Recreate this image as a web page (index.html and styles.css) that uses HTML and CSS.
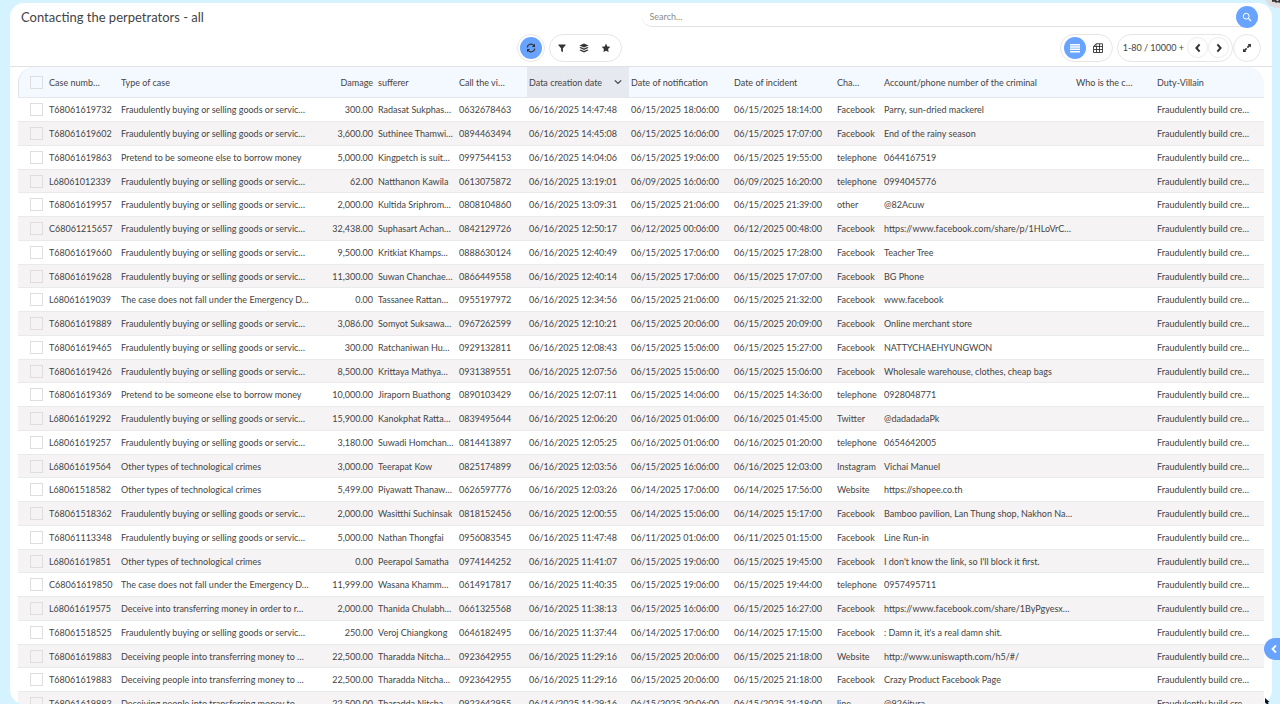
FILE: index.html
```
<!DOCTYPE html>
<html lang="en">
<head>
<meta charset="utf-8">
<title>Contacting the perpetrators</title>
<link rel="stylesheet" href="styles.css">
</head>
<body>
<main class="card">
  <header class="topbar">
    <h1 class="title">Contacting the perpetrators - all</h1>
    <form class="search">
      <input class="search-input" type="text" placeholder="Search..." aria-label="Search">
      <button class="search-button" type="button" aria-label="Search">
        <svg width="10" height="10" viewBox="0 0 10 10" fill="none" stroke="currentColor"><circle cx="4.2" cy="4.2" r="2.9"/><path d="M6.4 6.4 9 9" stroke-width="1.3"/></svg>
      </button>
    </form>
  </header>
  <div class="toolbar">
    <div class="tools tools-middle">
      <div class="pill">
        <button class="round active" type="button" aria-label="Refresh">
          <svg width="10" height="10" viewBox="0 0 10 10" fill="none" stroke="currentColor" stroke-width="1.2"><path d="M1.2 4.4A3.8 3.8 0 0 1 8 2.7M8.8 5.6A3.8 3.8 0 0 1 2 7.3"/><path d="M9 .8V4H5.8ZM1 9.2V6h3.2Z" fill="currentColor" stroke="none"/></svg>
        </button>
      </div>
      <div class="pill views">
        <button class="round" type="button" aria-label="Filter">
          <svg width="10" height="10" viewBox="0 0 10 10" fill="currentColor"><path d="M1.400 1.500h7.200v.8L5.900 5.200v4L4.100 8V5.200L1.400 2.300Z"/></svg>
        </button>
        <button class="round" type="button" aria-label="Layers">
          <svg width="10" height="10" viewBox="0 0 10 10" fill="currentColor"><path d="M5 .4 9.6 2.5 5 4.6.4 2.5Z"/><path d="M.4 4.7 1.8 4 5 5.5 8.2 4l1.4.7L5 6.9ZM.4 7.2l1.4-.7L5 8l3.2-1.5 1.4.7L5 9.6Z"/></svg>
        </button>
        <button class="round" type="button" aria-label="Favourites">
          <svg width="10" height="10" viewBox="0 0 10 10" fill="currentColor"><path d="m5 .6 1.300 2.800 3 .4-2.200 2.200.5 3.100L5 7.700 2.400 9.100l.5-3.100L.7 3.800l3-.4Z"/></svg>
        </button>
      </div>
    </div>
    <div class="tools tools-right">
      <div class="pill modes">
        <button class="round active light" type="button" aria-label="List view">
          <svg width="10" height="10" viewBox="0 0 10 10" fill="currentColor"><path d="M0 1h10v1.500H0zM0 3.300h10v1.500H0zM0 5.600h10v1.500H0zM0 7.900h10v1.500H0z"/></svg>
        </button>
        <button class="round" type="button" aria-label="Pivot view">
          <svg width="10" height="10" viewBox="0 0 10 10" fill="none" stroke="currentColor" stroke-width=".9"><path d="M.5 3.500H3V.8h6.500v8.700h-9ZM.5 3.500 3 .8M3 3.500h6.500M.5 6.500h9M3.500 3v6.500M6.500.8v8.700"/></svg>
        </button>
      </div>
      <div class="pager-group">
        <div class="pill pager">
          <span class="count">1-80 / 10000 +</span>
          <button class="round ringed" type="button" aria-label="Previous page">
            <svg width="10" height="10" viewBox="0 0 10 10" fill="none" stroke="currentColor" stroke-width="2"><path d="M6.600 1.300 3.400 5l3.200 3.700"/></svg>
          </button>
          <button class="round ringed" type="button" aria-label="Next page">
            <svg width="10" height="10" viewBox="0 0 10 10" fill="none" stroke="currentColor" stroke-width="2"><path d="M3.400 1.300 6.600 5 3.400 8.700"/></svg>
          </button>
        </div>
        <div class="pill">
          <button class="round" type="button" aria-label="Expand">
            <svg width="10" height="10" viewBox="0 0 10 10" fill="currentColor"><path d="M9 1v3.400L7.900 3.300 6 5.200 4.800 4 6.700 2.100 5.600 1ZM1 9V5.600l1.100 1.100L4 4.800 5.200 6 3.300 7.900 4.400 9Z"/></svg>
          </button>
        </div>
      </div>
    </div>
  </div>
  <div class="table-wrap">
    <table class="grid">
      <colgroup>
        <col class="c-check"><col class="c-case"><col class="c-type"><col class="c-damage"><col class="c-name"><col class="c-call"><col class="c-created"><col class="c-date"><col class="c-date"><col class="c-channel"><col class="c-account"><col class="c-who"><col class="c-duty">
      </colgroup>
      <thead>
        <tr>
          <th><input class="tick" type="checkbox" aria-label="Select all"></th>
          <th>Case numb…</th>
          <th>Type of case</th>
          <th class="num">Damage</th>
          <th>sufferer</th>
          <th>Call the vi…</th>
          <th class="sorted"><span class="sort-head">Data creation date <svg width="8" height="8" viewBox="0 0 8 8" fill="none" stroke="currentColor" stroke-width="1.200"><path d="M.8 2.300 4 5.500l3.200-3.200"/></svg></span></th>
          <th>Date of notification</th>
          <th>Date of incident</th>
          <th>Cha…</th>
          <th>Account/phone number of the criminal</th>
          <th>Who is the c…</th>
          <th>Duty-Villain</th>
        </tr>
      </thead>
      <tbody id="rows"></tbody>
    </table>
  </div>
</main>
<button class="drawer" type="button" aria-label="Open side panel">
  <svg width="8" height="10" viewBox="0 0 8 10" fill="none" stroke="currentColor" stroke-width="1.800"><path d="M6 1.500 2.500 5 6 8.500"/></svg>
</button>
<svg class="corner-badge" width="16" height="8" viewBox="0 0 16 8" aria-hidden="true"><circle cx="14" cy="-6" r="14" fill="#dedcdf"/><path d="M8 0h4l1.500 1.200L15 0h1v3l-2-.8-2 .6L10 1.500 8 2Z" fill="#333"/></svg>
<svg class="pointer" width="5" height="6" viewBox="0 0 5 6" aria-hidden="true"><path d="M0 0 4.500 4 2.800 4.300 3.600 6H1.800L0 4.500Z" fill="#111"/></svg>
<script src="app.js"></script>
</body>
</html>
```
FILE: styles.css
```
* { box-sizing: border-box; }

body {
  margin: 0;
  height: 100vh;
  padding: 3px 8px 0 10px;
  overflow: hidden;
  background: #d4f2ff;
  color: #444;
  font-family: Lato, sans-serif;
  font-size: 9px;
}

button, input { font: inherit; color: inherit; }

.card {
  display: flex;
  flex-direction: column;
  height: 100%;
  overflow: hidden;
  border-radius: 14px;
  background: #fff;
}

.topbar {
  display: grid;
  grid-template-columns: 1fr 1fr;
  align-items: center;
  height: 28px;
  flex: none;
  padding: 0 14px 0 11px;
}

.title { margin: 0; font-size: 13px; font-weight: 400; }

.search {
  display: flex;
  align-items: center;
  height: 20px;
  margin-left: 2px;
  border-bottom: 1px solid #e0e2e4;
  border-radius: 10px;
}

.search-input {
  flex: 1;
  min-width: 0;
  padding: 0 8px;
  border: 0;
  outline: 0;
  background: none;
}

.search-input::placeholder { color: #8c8c8c; }

.search-button {
  display: grid;
  place-items: center;
  width: 22px;
  height: 22px;
  padding: 0;
  border: 0;
  border-radius: 50%;
  background: #68a4ff;
  color: #fff;
}

.toolbar {
  display: grid;
  grid-template-columns: 1fr auto 1fr;
  align-items: center;
  flex: none;
  height: 36px;
  padding: 0 11px 2px;
  border-bottom: 1px solid #e0e1e3;
}

.tools { display: flex; align-items: center; gap: 4px; }
.tools-middle { grid-column: 2; margin-right: 144px; }
.tools-right { grid-column: 3; justify-content: flex-end; }
.pager-group { display: flex; }

.pill {
  display: flex;
  align-items: center;
  height: 28px;
  padding: 2px;
  border: 1px solid #e6e6e6;
  border-radius: 14px;
}

.views { padding: 0 4px 0 1px; }
.modes { gap: 1px; padding: 0 3px; }
.pager { padding: 0 3px 0 5px; }

.round {
  display: grid;
  place-items: center;
  width: 22px;
  height: 22px;
  padding: 0;
  border: 0;
  border-radius: 50%;
  background: none;
  color: #333;
}

.active { background: #68a4ff; }
.light { color: #fff; }
.ringed { width: 21px; height: 21px; border: 1px solid #ececec; }
.count { padding-right: 3px; }

.table-wrap { flex: 1; min-height: 0; overflow: hidden; padding: 0 8px; }

.grid {
  width: 100%;
  table-layout: fixed;
  border-collapse: separate;
  border-spacing: 0;
}

.c-check { width: 29px; }
.c-case { width: 72px; }
.c-type { width: 191px; }
.c-damage { width: 66px; }
.c-name { width: 81px; }
.c-call { width: 70px; }
.c-created { width: 102px; }
.c-date { width: 103px; }
.c-channel { width: 47px; }
.c-account { width: 192px; }
.c-who { width: 81px; }
.c-duty { width: 109px; }

.grid th, .grid td {
  padding: 0 3px 0 2px;
  font-weight: 400;
  text-align: left;
  white-space: nowrap;
}

.grid th {
  height: 31px;
  border-bottom: 1px solid #e6e7ea;
  background: #f4f8ff;
}

.grid th:first-child { border-left: 1px solid #e0e2e6; border-top-left-radius: 16px; }
.grid th:last-child { border-top-right-radius: 16px; }

.grid td { height: 24px; border-bottom: 1px solid #e8eaec; }
.grid tr:nth-child(4n) td { height: 23px; }
.grid tr:nth-child(even) td { background: #f5f3f4; }
.grid .num { text-align: right; }
.grid .sorted { background: #e6e9f0; }
.grid th:first-child, .grid td:first-child { padding: 0 3px 0 12px; }
.grid th:first-child { padding-left: 11px; }

.sort-head { display: flex; align-items: center; justify-content: space-between; padding-right: 4px; }

.tick {
  display: block;
  appearance: none;
  width: 13px;
  height: 13px;
  margin: 0;
  border: 1px solid #dedede;
}

.drawer {
  position: absolute;
  right: 0;
  top: 638px;
  display: grid;
  place-items: center;
  width: 16px;
  height: 22px;
  padding: 0 0 0 4px;
  border: 0;
  border-radius: 11px 0 0 11px;
  background: #68a4ff;
  color: #fff;
}

.corner-badge { position: absolute; top: 0; right: 0; }
.pointer { position: absolute; right: 10px; bottom: 0; }
```
FILE: app.js
```
const BUY = "Fraudulently buying or selling goods or servic…";
const PRETEND = "Pretend to be someone else to borrow money";
const DECREE = "The case does not fall under the Emergency D…";
const OTHER = "Other types of technological crimes";
const DECEIVE = "Deceive into transferring money in order to r…";
const PEOPLE = "Deceiving people into transferring money to …";
const DUTY = "Fraudulently build cre…";

const cases = [
  ["T68061619732", BUY, "300.00", "Radasat Sukphas…", "0632678463", "06/16/2025 14:47:48", "06/15/2025 18:06:00", "06/15/2025 18:14:00", "Facebook", "Parry, sun-dried mackerel"],
  ["T68061619602", BUY, "3,600.00", "Suthinee Thamwi…", "0894463494", "06/16/2025 14:45:08", "06/15/2025 16:06:00", "06/15/2025 17:07:00", "Facebook", "End of the rainy season"],
  ["T68061619863", PRETEND, "5,000.00", "Kingpetch is suit…", "0997544153", "06/16/2025 14:04:06", "06/15/2025 19:06:00", "06/15/2025 19:55:00", "telephone", "0644167519"],
  ["L68061012339", BUY, "62.00", "Natthanon Kawila", "0613075872", "06/16/2025 13:19:01", "06/09/2025 16:06:00", "06/09/2025 16:20:00", "telephone", "0994045776"],
  ["T68061619957", BUY, "2,000.00", "Kultida Sriphrom…", "0808104860", "06/16/2025 13:09:31", "06/15/2025 21:06:00", "06/15/2025 21:39:00", "other", "@82Acuw"],
  ["C68061215657", BUY, "32,438.00", "Suphasart Achan…", "0842129726", "06/16/2025 12:50:17", "06/12/2025 00:06:00", "06/12/2025 00:48:00", "Facebook", "https://www.facebook.com/share/p/1HLoVrC…"],
  ["T68061619660", BUY, "9,500.00", "Kritkiat Khamps…", "0888630124", "06/16/2025 12:40:49", "06/15/2025 17:06:00", "06/15/2025 17:28:00", "Facebook", "Teacher Tree"],
  ["T68061619628", BUY, "11,300.00", "Suwan Chanchae…", "0866449558", "06/16/2025 12:40:14", "06/15/2025 17:06:00", "06/15/2025 17:07:00", "Facebook", "BG Phone"],
  ["L68061619039", DECREE, "0.00", "Tassanee Rattan…", "0955197972", "06/16/2025 12:34:56", "06/15/2025 21:06:00", "06/15/2025 21:32:00", "Facebook", "www.facebook"],
  ["T68061619889", BUY, "3,086.00", "Somyot Suksawa…", "0967262599", "06/16/2025 12:10:21", "06/15/2025 20:06:00", "06/15/2025 20:09:00", "Facebook", "Online merchant store"],
  ["T68061619465", BUY, "300.00", "Ratchaniwan Hu…", "0929132811", "06/16/2025 12:08:43", "06/15/2025 15:06:00", "06/15/2025 15:27:00", "Facebook", "NATTYCHAEHYUNGWON"],
  ["T68061619426", BUY, "8,500.00", "Krittaya Mathya…", "0931389551", "06/16/2025 12:07:56", "06/15/2025 15:06:00", "06/15/2025 15:06:00", "Facebook", "Wholesale warehouse, clothes, cheap bags"],
  ["T68061619369", PRETEND, "10,000.00", "Jiraporn Buathong", "0890103429", "06/16/2025 12:07:11", "06/15/2025 14:06:00", "06/15/2025 14:36:00", "telephone", "0928048771"],
  ["L68061619292", BUY, "15,900.00", "Kanokphat Ratta…", "0839495644", "06/16/2025 12:06:20", "06/16/2025 01:06:00", "06/16/2025 01:45:00", "Twitter", "@dadadadaPk"],
  ["L68061619257", BUY, "3,180.00", "Suwadi Homchan…", "0814413897", "06/16/2025 12:05:25", "06/16/2025 01:06:00", "06/16/2025 01:20:00", "telephone", "0654642005"],
  ["L68061619564", OTHER, "3,000.00", "Teerapat Kow", "0825174899", "06/16/2025 12:03:56", "06/15/2025 16:06:00", "06/16/2025 12:03:00", "Instagram", "Vichai Manuel"],
  ["L68061518582", OTHER, "5,499.00", "Piyawatt Thanaw…", "0626597776", "06/16/2025 12:03:26", "06/14/2025 17:06:00", "06/14/2025 17:56:00", "Website", "https://shopee.co.th"],
  ["T68061518362", BUY, "2,000.00", "Wasitthi Suchinsak", "0818152456", "06/16/2025 12:00:55", "06/14/2025 15:06:00", "06/14/2025 15:17:00", "Facebook", "Bamboo pavilion, Lan Thung shop, Nakhon Na…"],
  ["T68061113348", BUY, "5,000.00", "Nathan Thongfai", "0956083545", "06/16/2025 11:47:48", "06/11/2025 01:06:00", "06/11/2025 01:15:00", "Facebook", "Line Run-in"],
  ["L68061619851", OTHER, "0.00", "Peerapol Samatha", "0974144252", "06/16/2025 11:41:07", "06/15/2025 19:06:00", "06/15/2025 19:45:00", "Facebook", "I don't know the link, so I'll block it first."],
  ["C68061619850", DECREE, "11,999.00", "Wasana Khamm…", "0614917817", "06/16/2025 11:40:35", "06/15/2025 19:06:00", "06/15/2025 19:44:00", "telephone", "0957495711"],
  ["L68061619575", DECEIVE, "2,000.00", "Thanida Chulabh…", "0661325568", "06/16/2025 11:38:13", "06/15/2025 16:06:00", "06/15/2025 16:27:00", "Facebook", "https://www.facebook.com/share/1ByPgyesx…"],
  ["T68061518525", BUY, "250.00", "Veroj Chiangkong", "0646182495", "06/16/2025 11:37:44", "06/14/2025 17:06:00", "06/14/2025 17:15:00", "Facebook", ": Damn it, it's a real damn shit."],
  ["T68061619883", PEOPLE, "22,500.00", "Tharadda Nitcha…", "0923642955", "06/16/2025 11:29:16", "06/15/2025 20:06:00", "06/15/2025 21:18:00", "Website", "http://www.uniswapth.com/h5/#/"],
  ["T68061619883", PEOPLE, "22,500.00", "Tharadda Nitcha…", "0923642955", "06/16/2025 11:29:16", "06/15/2025 20:06:00", "06/15/2025 21:18:00", "Facebook", "Crazy Product Facebook Page"],
  ["T68061619883", PEOPLE, "22,500.00", "Tharadda Nitcha…", "0923642955", "06/16/2025 11:29:16", "06/15/2025 20:06:00", "06/15/2025 21:18:00", "line", "@926jtyra"]
];

const body = document.getElementById("rows");
for (const record of cases) {
  const row = body.insertRow();
  const tick = document.createElement("input");
  tick.type = "checkbox";
  tick.className = "tick";
  tick.setAttribute("aria-label", "Select case " + record[0]);
  row.insertCell().append(tick);
  [...record, "", DUTY].forEach((text, index) => {
    const cell = row.insertCell();
    cell.textContent = text;
    if (index === 2) cell.className = "num";
  });
}
```
